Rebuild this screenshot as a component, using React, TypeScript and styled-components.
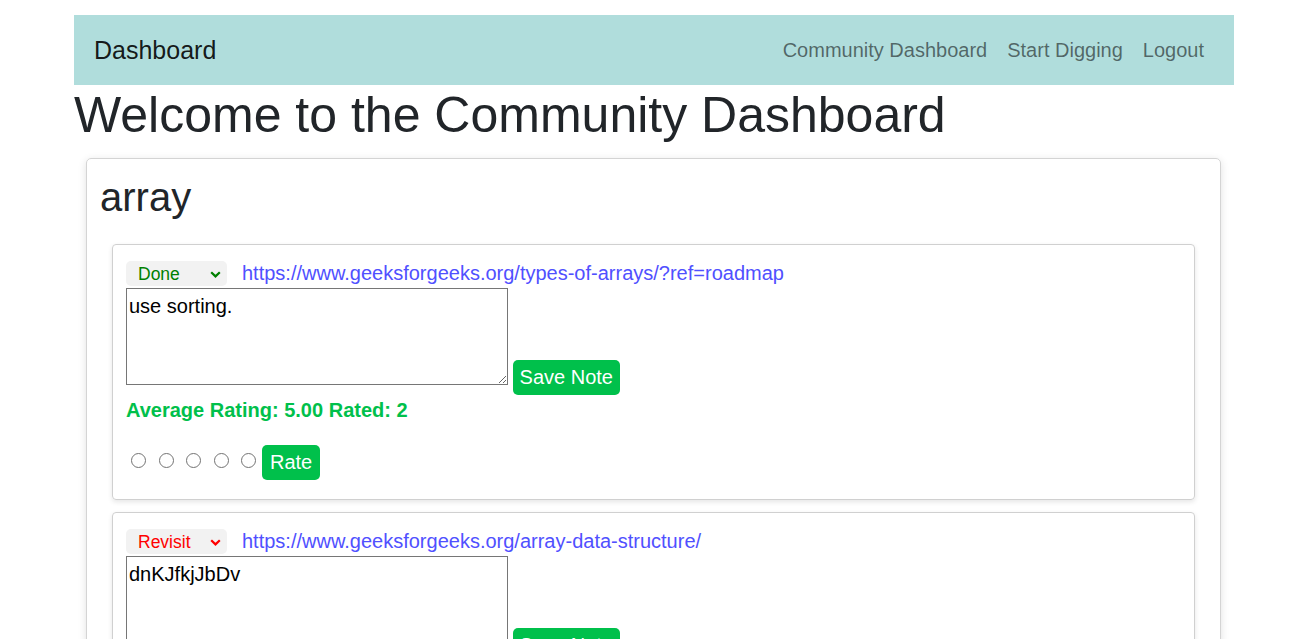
import { createGlobalStyle } from 'styled-components';
import styled from 'styled-components';

const GlobalStyle = createGlobalStyle`
  body {
    margin: 0;
    font-family: "Liberation Sans", Arial, sans-serif;
    color: #212529;
    background: #fff;
  }
`;

const S = {
  Page: styled.div`
    width: 1160px;
    margin-left: 74px;
    padding-top: 15px;
  `,

  Navbar: styled.nav`
    display: flex;
    align-items: center;
    justify-content: space-between;
    height: 70px;
    padding: 0 30px 0 20px;
    background-color: #b0dddc;
  `,

  Brand: styled.a`
    font-size: 25px;
    color: rgba(0, 0, 0, 0.9);
    text-decoration: none;
  `,

  NavLinks: styled.div`
    display: flex;
    gap: 20px;
  `,

  NavLink: styled.a`
    font-size: 20px;
    color: rgba(0, 0, 0, 0.55);
    text-decoration: none;
  `,

  Heading: styled.h1`
    margin: 0;
    font-size: 50px;
    font-weight: 400;
    line-height: 60px;
  `,

  TopicCard: styled.section`
    margin: 13px 0 0 12px;
    width: 1135px;
    padding: 14px 25px 20px;
    box-sizing: border-box;
    border: 1px solid #d4d4d4;
    border-radius: 5px;
    box-shadow: 0 2px 8px rgba(0, 0, 0, 0.12);
  `,

  TopicTitle: styled.h2`
    margin: 0 0 23px -12px;
    font-size: 40px;
    font-weight: 400;
    line-height: 48px;
  `,

  ResourceList: styled.div`
    display: flex;
    flex-direction: column;
    gap: 12px;
  `,

  ResourceCard: styled.article`
    padding: 16px 13px 19px;
    border: 1px solid #d0d0d0;
    border-radius: 4px;
    box-shadow: 0 2px 5px rgba(0, 0, 0, 0.1);
  `,

  HeaderRow: styled.div`
    display: flex;
    align-items: center;
    gap: 15px;
    height: 25px;
  `,

  SelectBox: styled.div<{ $tone: string }>`
    position: relative;
    width: 101px;
    height: 25px;
    color: ${({ $tone }) => $tone};

    svg {
      position: absolute;
      right: 6px;
      top: 10px;
      pointer-events: none;
    }
  `,

  StatusSelect: styled.select`
    appearance: none;
    width: 100%;
    height: 100%;
    padding: 0 24px 0 12px;
    border: none;
    border-radius: 5px;
    background-color: #f2f2f2;
    color: inherit;
    font-family: inherit;
    font-size: 17.5px;
    outline: none;
  `,

  Link: styled.a`
    font-size: 20px;
    line-height: 21px;
    color: #5050ff;
    text-decoration: none;
  `,

  NoteRow: styled.div`
    margin-top: 2px;
    font-size: 20px;
  `,

  NoteArea: styled.textarea`
    width: 382px;
    height: 97px;
    box-sizing: border-box;
    margin: 0;
    padding: 6px 2px 2px;
    border: 1px solid #767676;
    font-family: inherit;
    font-size: 20px;
    color: #000;
    resize: both;
    vertical-align: baseline;
  `,

  GreenButton: styled.button`
    height: 35px;
    padding: 0 8px;
    border: none;
    border-radius: 5px;
    background-color: #00c04b;
    color: #fff;
    font-family: inherit;
    font-size: 20px;
    cursor: pointer;
  `,

  SaveButton: styled.button`
    height: 35px;
    margin-left: -1px;
    padding: 0 7px;
    border: none;
    border-radius: 5px;
    background-color: #00c04b;
    color: #fff;
    font-family: inherit;
    font-size: 20px;
    vertical-align: 1px;
    cursor: pointer;
  `,

  Rating: styled.p`
    margin: 5px 0 0;
    font-size: 20px;
    font-weight: 700;
    line-height: 21px;
    color: #00c04b;
  `,

  RateRow: styled.div`
    display: flex;
    align-items: center;
    margin-top: 24px;
    padding-left: 5px;
  `,

  Stars: styled.div`
    display: flex;
    gap: 12.5px;
    margin: 0 6px 4px 0;
  `,

  Radio: styled.input`
    appearance: none;
    width: 15px;
    height: 15px;
    margin: 0;
    box-sizing: border-box;
    border: 1.5px solid #737373;
    border-radius: 50%;
    background: #fff;
  `,
};

type Resource = {
  id: number;
  status: 'Done' | 'Revisit';
  url: string;
  note: string;
  average: string;
  rated: number;
};

const resources: Resource[] = [
  {
    id: 1,
    status: 'Done',
    url: 'https://www.geeksforgeeks.org/types-of-arrays/?ref=roadmap',
    note: 'use sorting.',
    average: '5.00',
    rated: 2,
  },
  {
    id: 2,
    status: 'Revisit',
    url: 'https://www.geeksforgeeks.org/array-data-structure/',
    note: 'dnKJfkjJbDv',
    average: '4.00',
    rated: 1,
  },
];

const toneOf = (status: Resource['status']) =>
  status === 'Done' ? '#008000' : '#ff0000';

function Chevron() {
  return (
    <svg width="11" height="7" viewBox="0 0 11 7" fill="none">
      <path d="M1.2 1.2 L5.5 5.4 L9.8 1.2" stroke="currentColor" strokeWidth="2.2" />
    </svg>
  );
}

function ResourceItem({ resource }: { resource: Resource }) {
  return (
    <S.ResourceCard>
      <S.HeaderRow>
        <S.SelectBox $tone={toneOf(resource.status)}>
          <S.StatusSelect defaultValue={resource.status}>
            <option value="Done">Done</option>
            <option value="Revisit">Revisit</option>
            <option value="Pending">Pending</option>
          </S.StatusSelect>
          <Chevron />
        </S.SelectBox>
        <S.Link href={resource.url}>{resource.url}</S.Link>
      </S.HeaderRow>
      <S.NoteRow>
        <S.NoteArea defaultValue={resource.note} />{' '}
        <S.SaveButton>Save Note</S.SaveButton>
      </S.NoteRow>
      <S.Rating>
        Average Rating: {resource.average} Rated: {resource.rated}
      </S.Rating>
      <S.RateRow>
        <S.Stars>
          {[1, 2, 3, 4, 5].map((n) => (
            <S.Radio key={n} type="radio" name={`rate-${resource.id}`} value={n} />
          ))}
        </S.Stars>
        <S.GreenButton>Rate</S.GreenButton>
      </S.RateRow>
    </S.ResourceCard>
  );
}

export default function App() {
  return (
    <>
      <GlobalStyle />
      <S.Page>
        <S.Navbar>
          <S.Brand href="#">Dashboard</S.Brand>
          <S.NavLinks>
            <S.NavLink href="#">Community Dashboard</S.NavLink>
            <S.NavLink href="#">Start Digging</S.NavLink>
            <S.NavLink href="#">Logout</S.NavLink>
          </S.NavLinks>
        </S.Navbar>
        <S.Heading>Welcome to the Community Dashboard</S.Heading>
        <S.TopicCard>
          <S.TopicTitle>array</S.TopicTitle>
          <S.ResourceList>
            {resources.map((r) => (
              <ResourceItem key={r.id} resource={r} />
            ))}
          </S.ResourceList>
        </S.TopicCard>
      </S.Page>
    </>
  );
}
